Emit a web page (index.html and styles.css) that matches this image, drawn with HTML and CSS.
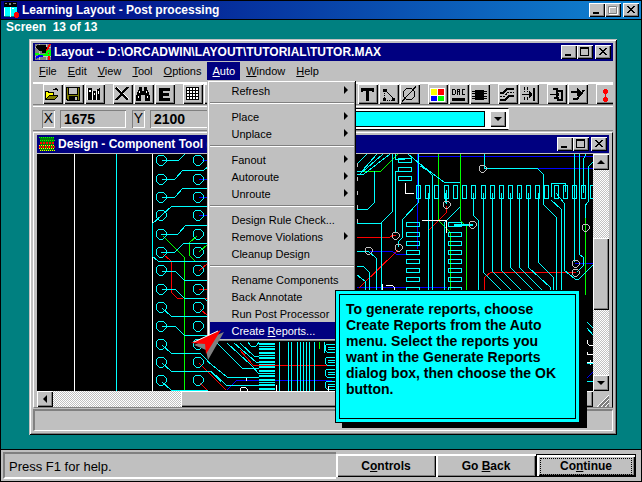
FILE: index.html
```html
<!DOCTYPE html>
<html lang="en">
<head>
<meta charset="utf-8">
<title>Learning Layout - Post processing</title>
<link rel="stylesheet" href="styles.css">
</head>
<body>
<div class="tutorial">
  <header class="titlebar titlebar-main">
    <svg class="app-icon" width="16" height="16" viewBox="0 0 16 16" shape-rendering="crispEdges"><path fill="#000" d="M1 0h13v5h-13z"/><path fill="#808080" d="M2 1h2v1h-2zM6 1h2v2h-2zM10 1h3v1h-3z"/><path fill="#0ff" d="M1 5h6v9h-6zM8 5h6v9h-6z"/><path fill="#fff" d="M1 6h1v8h-1zM7 5h1v10h-1zM9 6h2v1h-2z"/><path fill="#008080" d="M1 14h6v1h-6zM8 14h6v1h-6z"/><path fill="red" d="M12 10h3v1h1v4h-1v1h-3v-1h-1v-4h1z"/></svg>
    <h1>Learning Layout - Post processing</h1>
    <div class="winbtns">
      <button aria-label="Minimize"><svg width="12" height="10"><path d="M2 7h6v2h-6z"/></svg></button><button aria-label="Maximize" disabled><svg width="12" height="10"><path fill="none" stroke="#fff" d="M2.500 2.500h8v7h-8z"/><path fill="none" stroke="#808080" d="M1.500 1.500h8v7h-8z"/></svg></button><button class="apart" aria-label="Close"><svg width="12" height="10"><path d="M2 1h2v1h1v1h2v-1h1v-1h2v1h-1v1h-1v1h-1v1h1v1h1v1h1v1h-2v-1h-1v-1h-2v1h-1v1h-2v-1h1v-1h1v-1h1v-1h-1v-1h-1v-1h-1z"/></svg></button>
    </div>
  </header>

  <main class="lesson">
    <p class="progress">Screen&nbsp; 13 of 13</p>

    <section class="window">
      <header class="titlebar">
        <svg class="app-icon" width="16" height="16" viewBox="0 0 16 16" shape-rendering="crispEdges"><path fill="#808080" d="M0 0h16v16h-16z"/><path stroke="#c0c0c0" d="M0 3.500h16M0 12.500h16M4.500 0v16M11.500 0v16"/><path d="M2 1h9v2h1v4l-2 2h-3v-2h-3l-3-3z"/><path stroke="red" stroke-width="2" d="M15 0l-3 6v2l2 5v3" fill="none"/><path stroke="#0f0" stroke-width="2" fill="none" d="M0 10h3l2 1h5l3-4h3M12 8v3h3v-3"/><path stroke="#00f" stroke-width="2" d="M1 14l3-2h4"/></svg>
        <h2>Layout -- D:\ORCADWIN\LAYOUT\TUTORIAL\TUTOR.MAX</h2>
        <div class="winbtns">
          <button aria-label="Minimize"><svg width="12" height="10"><path d="M2 7h6v2h-6z"/></svg></button><button aria-label="Maximize"><svg width="12" height="10"><path d="M1 0h9v9h-9zM2 2v6h7v-6z" fill-rule="evenodd"/></svg></button><button class="apart" aria-label="Close"><svg width="12" height="10"><path d="M2 1h2v1h1v1h2v-1h1v-1h2v1h-1v1h-1v1h-1v1h1v1h1v1h1v1h-2v-1h-1v-1h-2v1h-1v1h-2v-1h1v-1h1v-1h1v-1h-1v-1h-1v-1h-1z"/></svg></button>
        </div>
      </header>

      <nav class="menubar">
        <button><u>F</u>ile</button><button><u>E</u>dit</button><button><u>V</u>iew</button><button><u>T</u>ool</button><button><u>O</u>ptions</button>
        <div class="menu-anchor">
          <button class="open"><u>A</u>uto</button>
          <div class="menu">
            <button class="sub">Refresh</button>
            <hr>
            <button class="sub">Place</button>
            <button class="sub">Unplace</button>
            <hr>
            <button class="sub">Fanout</button>
            <button class="sub">Autoroute</button>
            <button class="sub">Unroute</button>
            <hr>
            <button>Design Rule Check...</button>
            <button class="sub">Remove Violations</button>
            <button>Cleanup Design</button>
            <hr>
            <button>Rename Components</button>
            <button>Back Annotate</button>
            <button>Run Post Processor</button>
            <button class="selected">Create <u>R</u>eports...</button>
          </div>
        </div>
        <button><u>W</u>indow</button><button><u>H</u>elp</button>
      </nav>

      <div class="toolbar">
        <div class="group">
          <button aria-label="Open"><svg viewBox="0 0 16 16"><path d="M1 5h4v1h5v3h4v1l-3 4h-10zM9 3h2v-1h2v1h1v2h-1v-1h-4z"/><path fill="#ff0" d="M2 6h2v1h5v2h-4l-3 4z"/><path fill="#808000" d="M5 10h8l-3 3h-7z"/></svg></button>
          <button aria-label="Save"><svg viewBox="0 0 16 16"><path d="M1 1h14v14h-13l-1-1z"/><path fill="#808000" d="M2 2h1v7h10v-7h1v12h-11l-1-1z"/><path fill="#c0c0c0" d="M4 2h8v6h-8z"/><path d="M4 10h9v4h-9z"/><path fill="#c0c0c0" d="M10 11h2v3h-2z"/></svg></button>
          <button aria-label="Library"><svg viewBox="0 0 16 16"><path d="M2 2h4v12h-4zM7 5h3v9h-3zM11 3l3-1v12h-3z"/><path fill="#fff" d="M1 2h1v12h-1zM3 4h2v2h-2zM6 5h1v9h-1zM8 7h1v2h-1zM10 4h1v10h-1zM12 5h1v3h-1z"/></svg></button>
        </div>
        <div class="group">
          <button aria-label="Delete"><svg viewBox="0 0 16 16"><path stroke="#fff" d="M3 1l12 12"/><path fill="none" stroke="#000" stroke-width="2" d="M2 2l12 12M14 1l-12 13"/></svg></button>
          <button aria-label="Find"><svg viewBox="0 0 16 16"><path d="M4 1h3v4h2v-4h3v3h1l2 7v4h-5v-6h-4v6h-5v-4l2-7h1z"/><path fill="#fff" d="M4 5h1v2h-1zM3 10h1v2h-1zM11 5h1v2h-1zM12 10h1v2h-1z"/></svg></button>
          <button aria-label="Edit"><svg viewBox="0 0 16 16"><path d="M3 2h11v3h-7v2h6v3h-6v2h7v3h-11z"/></svg></button>
        </div>
        <div class="group">
          <button aria-label="Spreadsheet"><svg viewBox="0 0 16 16"><path d="M2 1h13v13h-13z"/><path fill="#fff" d="M3 2h2v2h-2zM6 2h2v2h-2zM9 2h2v2h-2zM12 2h2v2h-2zM3 5h2v2h-2zM6 5h2v2h-2zM9 5h2v2h-2zM12 5h2v2h-2zM3 8h2v2h-2zM6 8h2v2h-2zM9 8h2v2h-2zM12 8h2v2h-2zM3 11h2v2h-2zM6 11h2v2h-2zM9 11h2v2h-2zM12 11h2v2h-2z"/></svg></button>
          <button></button><button></button>
        </div>
        <div class="group"><button></button><button></button></div>
        <div class="group"><button></button></div>
        <div class="group"><button></button></div>
        <div class="group">
          <button aria-label="Text"><svg viewBox="0 0 16 16"><path d="M2 2h13v4h-2v-1h-3v10h-3v-10h-3v1h-2z"/></svg></button>
          <button aria-label="Connection"><svg viewBox="0 0 16 16"><path d="M3 3h4v3h-4zM3 12h3v3h-3zM12 12h3v3h-3z"/><path stroke="#000" fill="none" d="M5.500 4.500l9 9"/><path stroke="#000" fill="none" stroke-dasharray="1 1" d="M4.500 5v8M5 14.500h8"/></svg></button>
          <button aria-label="Error"><svg viewBox="0 0 16 16"><path stroke="#000" fill="none" d="M5.500 2.500h5l3 3v5l-3 3h-5l-3-3v-5zM1 15.500l14-15"/></svg></button>
        </div>
        <div class="group">
          <button aria-label="Color"><svg viewBox="0 0 16 16"><path fill="#fff" d="M1 2h15v14h-15z"/><path fill="#ff0" d="M2 3h6v6h-6z"/><path fill="red" d="M9 3h6v6h-6z"/><path fill="#00f" d="M2 10h6v5h-6z"/><path fill="#0f0" d="M9 10h6v5h-6z"/></svg></button>
          <button aria-label="Design rule check"><svg viewBox="0 0 16 16"><path d="M2 12h13v3h-13z"/><path fill="none" stroke="#000" d="M2.500 8.500v-5h2l1 1v3l-1 1zM7.500 9v-5.500h2v2h-2M9.500 6v3M15 3.500h-2l-1 1v3l1 1h2"/></svg></button>
          <button aria-label="Footprint"><svg viewBox="0 0 16 16"><path d="M4 4h9v10h-9zM1 5h15v1h-15zM1 7h15v1h-15zM1 10h15v1h-15zM1 12h15v1h-15z"/></svg></button>
        </div>
        <div class="group">
          <button aria-label="Auto path route"><svg viewBox="0 0 16 16"><path fill="none" stroke="#000" stroke-width="2" d="M1 7h3l4-4h7M1 14h5l4-4h5"/><path fill="none" stroke="#000" stroke-dasharray="2 1" d="M1 10.500h4l4-4h6"/></svg></button>
          <button aria-label="Shove track"><svg viewBox="0 0 16 16"><path stroke="#000" stroke-dasharray="3 1" d="M4.500 1v5M4.500 11v4M7.500 1v5M7.500 11v4" fill="none"/><path d="M13 2h2v13h-2zM2 8h7v-3l3 3v1l-3 3v-3h-7z"/></svg></button>
        </div>
        <div class="group">
          <button aria-label="Edit segment"><svg viewBox="0 0 16 16"><path fill="none" stroke="#000" stroke-width="2" d="M5 3h4v2h5v9h-4v-2h-4"/><path d="M2 8h6v-3l3 3v1l-3 3v-3h-6z"/></svg></button>
          <button aria-label="Add route"><svg viewBox="0 0 16 16"><path fill="none" stroke="#000" stroke-width="2" d="M2 6h8M4 13h4l7-9"/><path d="M8 2l4 4-4 4z"/></svg></button>
        </div>
        <div class="group last">
          <button aria-label="Refresh all"><svg viewBox="0 0 16 16"><path fill="red" d="M7 3h3v1h1v3h-1v1h-1v3h1v1h1v3h-1v1h-3v-1h-1v-3h1v-1h1v-3h-1v-1h-1v-3h1z"/></svg></button>
        </div>
      </div>

      <div class="coords">
        <label for="x">X</label><input id="x" value="1675" readonly>
        <label for="y">Y</label><input id="y" value="2100" readonly>
        <div class="combo"><select aria-label="Layer"><option></option></select><span class="scrollbtn"><i class="down"></i></span></div>
      </div>

      <section class="design">
        <header class="titlebar">
          <svg class="app-icon" width="16" height="16" viewBox="0 0 16 16" shape-rendering="crispEdges"><path fill="#008000" d="M1 1h14v14h-14z"/><g fill="none" stroke-dasharray="1 1"><path stroke="#0f0" d="M0 1.500h16M1 4.500h15"/><path stroke="red" stroke-width="2" stroke-dasharray="2 1" d="M1 7h15M0 11h16"/><path stroke="#ff0" d="M0 9.500h16M1 14.500h15M0 12.500h15"/></g></svg>
          <h2>Design - Component Tool (</h2>
          <div class="winbtns">
            <button aria-label="Minimize"><svg width="12" height="10"><path d="M2 7h6v2h-6z"/></svg></button><button aria-label="Maximize"><svg width="12" height="10"><path d="M1 0h9v9h-9zM2 2v6h7v-6z" fill-rule="evenodd"/></svg></button><button class="apart" aria-label="Close"><svg width="12" height="10"><path d="M2 1h2v1h1v1h2v-1h1v-1h2v1h-1v1h-1v1h-1v1h1v1h1v1h1v1h-2v-1h-1v-1h-2v1h-1v1h-2v-1h1v-1h1v-1h1v-1h-1v-1h-1v-1h-1z"/></svg></button>
          </div>
        </header>
        <div class="viewport">
          <svg class="board" shape-rendering="crispEdges">
            <defs>
              <path id="via" d="M-2 -5h4l3 3v4l-3 3h-4l-3-3v-4z"/>
              <path id="ring" d="M-1 -3h3l2 2v3l-2 2h-3l-2-2v-3z"/>
              <path id="pin" d="M0 0h4v13h-4z"/>
              <path id="pad" d="M0 0h13v4h-13z"/>
            </defs>
            <g transform="translate(-37 -154)" fill="none" stroke-width="1">
              <path stroke="#00f" d="M202 160h6M199 179h9M199 197h9M199 215h9M417 154v95M417 156h176M537 168h56M370 251h22l4 3h15M357 287h90M575 263h18M227 390l10-10h95M587 378l6-6"/>
              <path stroke="red" d="M163 254l8 7v31l6 6h6M199 271l9-8M199 289h9M204 298h4M200 309l8 7M199 363l16 16M200 383l8 8M357 237h33l3-2h3M398 250l-39 38M446 206v7l-17 17M576 272h-85l-7 6v14M240 350l13 15h75M205 369l21 21"/>
              <path stroke="#0f0" d="M163 236l21 21v134M197 236l-8 7v12l6 6M199 252l9-8M361 171h20l17-17M438 154v66l12 12v60M460 154v66l6 6v66M585 210v86M319 341v8"/>
              <path stroke="#fff" d="M74 154v237M152 154v71M152 256v135"/>
              <path stroke="#0ff" d="M116 154v237M152 224v32M162 160h17l6-6M162 179h13l8-9h21l4-3M162 197h13l8-9h25M152 224l20-18h36M161 234h17l8-9h22M161 252h14l9-9h24M152 256l6 5h50M162 271h13l9 9h24M162 289h13l9 9h20l4 4M162 308l9 8h37M162 326h13l9 9h24M162 345l9 8h29l14 14M162 363l9 8h39l11 11M162 382l9 8h37"/>
              <path stroke="#0ff" d="M217 343l25 25h17M227 343l24 22 8 9M234 343l22 19h3M240 343l14 13h5M207 361l20 16h32M205 371h6l15 14h33M279 341v50M288 341v50M291 341v50M297 341v50M300 341v50M303 341v50M306 341v50M309 341v50M314 341v50M324 341v12M247 341l4 5h5l4-5"/>
              <path stroke="#0ff" d="M357 164l10-10M357 171h5l15-17M360 174l23-20M357 174h7l26-20M374 171v32l-6 6h-11M392 154v58l-11 11h-24M381 223v68M395 154v5h10M395 233v-62h10M418 154v49l-16 17v18l-4 4v5M357 251h11l8 7v33M357 266h6l6 6v19M357 275l8 6v10M408 154l12 10 24 18h16M420 166l7 4 5 5v117M428 193v98M446 190v14M460 207l-16 16v69M473 193v22l5 5v72M483 193v79l20 20M492 193v78l21 21M501 193v77l22 22M510 193v74l25 25M519 193v74l24 24M528 193v74l22 20v5M538 193v69l15 15v15M484 154v14h53l6 6v30l13 13v75M551 197v-14h14v9M551 200l10 9v83M556 193l8 10v67l11 9h4l14-14M574 154v108M579 154v100l4 3v9l-6 6M583 193v-33l3-6M593 162l-5 5v35l-3 4v12"/>
              <path stroke="#0ff" stroke-width="2" d="M454 225h19M446 193v10"/>
              <g stroke="#0ff">
                <use href="#via" x="161" y="160"/><use href="#via" x="161" y="179"/><use href="#via" x="161" y="197"/><use href="#via" x="161" y="215"/><use href="#via" x="161" y="234"/><use href="#via" x="161" y="252"/><use href="#via" x="161" y="270"/><use href="#via" x="161" y="289"/><use href="#via" x="161" y="307"/><use href="#via" x="161" y="326"/><use href="#via" x="161" y="344"/><use href="#via" x="161" y="362"/><use href="#via" x="161" y="380"/>
                <use href="#via" x="198" y="160"/><use href="#via" x="198" y="179"/><use href="#via" x="198" y="197"/><use href="#via" x="198" y="215"/><use href="#via" x="198" y="234"/><use href="#via" x="198" y="252"/><use href="#via" x="198" y="270"/><use href="#via" x="198" y="289"/><use href="#via" x="198" y="307"/><use href="#via" x="198" y="326"/><use href="#via" x="198" y="344"/><use href="#via" x="198" y="362"/><use href="#via" x="198" y="380"/>
                <use href="#pin" x="416" y="185"/><use href="#pin" x="425" y="185"/><use href="#pin" x="434" y="185"/><use href="#pin" x="444" y="185"/><use href="#pin" x="453" y="185"/><use href="#pin" x="462" y="185"/><use href="#pin" x="471" y="185"/><use href="#pin" x="481" y="185"/><use href="#pin" x="490" y="185"/><use href="#pin" x="499" y="185"/><use href="#pin" x="508" y="185"/><use href="#pin" x="517" y="185"/><use href="#pin" x="526" y="185"/><use href="#pin" x="535" y="185"/><use href="#pin" x="544" y="185"/><use href="#pin" x="554" y="185"/><use href="#pin" x="563" y="185"/><use href="#pin" x="572" y="185"/><use href="#pin" x="581" y="185"/><use href="#pin" x="590" y="185"/>
                <use href="#pad" x="398" y="158"/><use href="#pad" x="398" y="167"/><use href="#pad" x="398" y="176"/>
                <use href="#pad" x="406" y="222"/><use href="#pad" x="406" y="232"/><use href="#pad" x="406" y="241"/><use href="#pad" x="406" y="250"/><use href="#pad" x="406" y="259"/><use href="#pad" x="406" y="268"/><use href="#pad" x="406" y="277"/><use href="#pad" x="406" y="287"/>
                <use href="#pad" x="448" y="222"/><use href="#pad" x="448" y="232"/><use href="#pad" x="448" y="241"/><use href="#pad" x="448" y="250"/><use href="#pad" x="448" y="259"/><use href="#pad" x="448" y="268"/><use href="#pad" x="448" y="277"/><use href="#pad" x="448" y="287"/>
              </g>
              <path stroke="#0ff" stroke-width="16" stroke-dasharray="2 1 1 1 2 2" d="M267 343v48"/>
              <path stroke="#0ff" d="M335 344h-8l-2 2v4l2 2h8M335 357h-8l-2 2v4l2 2h8M335 369h-8l-2 2v4l2 2h8M335 381h-8l-2 2v4l2 2h8M328 347h7M328 349h7M328 360h7M328 362h7M328 372h7M328 374h7M328 384h7M328 386h7"/>
              <g stroke="#c0c0c0"><use href="#ring" x="395" y="235"/><use href="#ring" x="398" y="247"/><use href="#ring" x="368" y="250"/><use href="#ring" x="482" y="168"/><use href="#ring" x="446" y="204"/><use href="#ring" x="472" y="224"/><use href="#ring" x="585" y="227"/><use href="#ring" x="575" y="263"/><use href="#ring" x="575" y="272"/></g>
              <path stroke="#c0c0c0" stroke-dasharray="4 10" d="M357 163v70"/>
              <path stroke="#fff" d="M405 183v10h9M422 220h24v13M382 284v6M386 285h6l2 2v4M240 391v-2l2-2h3l2 2v2M246 378v3M276 385v6M328 386v5M587 340v3l2 2h4M587 352v2h6M587 362h6M590 360v5"/>
              <path stroke="#0ff" d="M587 322l6 6M587 328l6 7M587 363h6M587 381h6"/>
            </g>
          </svg>
          <div class="vscroll">
            <button class="scrollbtn" aria-label="Scroll up"><i class="up"></i></button>
            <span class="vthumb"></span>
            <button class="scrollbtn" aria-label="Scroll down"><i class="down"></i></button>
          </div>
          <div class="hscroll">
            <button class="scrollbtn" aria-label="Scroll left"><i class="left"></i></button>
            <span class="hthumb"></span>
          </div>
          <svg class="grip" width="16" height="16" shape-rendering="crispEdges"><path stroke="#fff" d="M4 16l12-12M8 16l8-8M12 16l4-4"/><path stroke="#808080" stroke-width="2" d="M6 16l10-10M10 16l6-6M14 16l2-2"/></svg>
        </div>
      </section>
      <div class="window-status"></div>
    </section>

    <svg class="pointer" width="36" height="32" viewBox="0 0 36 32"><path fill="#808080" d="M4 15l30-13-16 28-2-10z"/><path fill="red" d="M1 13l30-13-15 24-1-10z"/><path fill="none" stroke="#fff" d="M4 12l24-11"/></svg>
    <aside class="callout"><p>To generate reports, choose<br>Create Reports from the Auto<br>menu. Select the reports you<br>want in the Generate Reports<br>dialog box, then choose the OK<br>button.</p></aside>
  </main>

  <footer class="statusbar">
    <p>Press F1 for help.</p>
    <button>C<u>o</u>ntrols</button>
    <button>Go <u>B</u>ack</button>
    <button class="default"><span>Co<u>n</u>tinue</span></button>
  </footer>
</div>
</body>
</html>
```
FILE: styles.css
```css
:root {
  --face: #c0c0c0;
  --shade: #808080;
  --navy: #000080;
  --raised: inset 1px 1px #fff, inset -1px -1px #000, inset -2px -2px var(--shade);
}
* { box-sizing: border-box; }
body { margin: 0; font: 11px "Liberation Sans", sans-serif; color: #000; }
h1, h2, p { margin: 0; }
button { font: inherit; color: inherit; margin: 0; padding: 0; border: 0; border-radius: 0; background: var(--face); }
svg { display: block; flex: none; }

.tutorial { display: flex; flex-direction: column; height: 100vh; border: 1px solid #000; background: #008080; }

/* Title bars */
.titlebar { display: flex; align-items: center; gap: 3px; height: 18px; flex: none; padding: 0 2px; background: var(--navy); color: #fff; }
.titlebar-main { background: linear-gradient(90deg, #000080, #1084d0); border-bottom: 1px solid #000; height: 19px; }
.titlebar h1, .titlebar h2 { flex: 1; min-width: 0; overflow: hidden; white-space: nowrap; font-size: 12px; line-height: 16px; font-weight: bold; }
.winbtns { display: flex; }
.winbtns button { width: 16px; height: 14px; padding: 2px; box-shadow: var(--raised); }
.winbtns .apart { margin-left: 2px; }

/* Lesson area */
.lesson { position: relative; flex: 1; min-height: 0; display: flex; flex-direction: column; padding: 0 24px 14px 28px; }
.progress { margin-left: -23px; height: 19px; flex: none; color: #fff; font: bold 12px/14px "Liberation Sans", sans-serif; }

.window { flex: 1; min-height: 0; display: flex; flex-direction: column; padding: 4px; background: var(--face); box-shadow: inset 1px 1px var(--face), inset -1px -1px #000, inset 2px 2px #fff, inset -2px -2px var(--shade); }

/* Menus */
.menubar { display: flex; flex: none; gap: 1px; height: 21px; padding: 1px 0 0 1px; }
.menubar button { height: 18px; padding: 0 5px; font-size: 11px; }
.menubar .open { background: var(--navy); color: #fff; }
.menu-anchor { position: relative; }
.menu { position: absolute; z-index: 2; left: 0; top: 18px; width: 149px; padding: 2px 2px 3px 3px; background: var(--face); box-shadow: inset 1px 1px var(--face), inset -1px -1px #000, inset 2px 2px #fff, inset -2px -2px var(--shade); }
.menu button { position: relative; display: block; width: 100%; height: 17px; padding: 0 0 0 21px; text-align: left; white-space: nowrap; font-size: 11px; }
.menu .selected { background: var(--navy); color: #fff; }
.menu .sub::after { content: ""; position: absolute; right: 6px; top: 4px; border: 4px solid transparent; border-left-color: #000; border-right-width: 0; }
.menu hr { height: 2px; margin: 3px 0 4px; border: 0; border-top: 1px solid var(--shade); background: #fff; }

/* Toolbar */
.toolbar { display: flex; flex: none; gap: 7px; height: 25px; padding-left: 10px; border-top: 2px solid #fff; border-bottom: 1px solid #fff; box-shadow: inset 0 -1px var(--face), inset 0 -2px var(--shade); overflow: hidden; }
.group { display: flex; flex: none; gap: 1px; padding-right: 1px; }
.toolbar button { width: 20px; height: 20px; padding: 1px 2px 2px 1px; box-shadow: var(--raised); }
.toolbar button svg { width: 16px; height: 16px; shape-rendering: crispEdges; }

/* Coordinates row */
.coords { display: flex; flex: none; align-items: center; height: 24px; padding-left: 9px; border-bottom: 1px solid var(--shade); font: bold 12px "Liberation Sans", sans-serif; }
.coords label { width: 13px; height: 18px; line-height: 17px; text-align: center; font-size: 14px; font-weight: normal; box-shadow: inset 1px 1px var(--shade), inset -1px -1px #fff; }
.coords input { width: 66px; height: 18px; margin: 0 6px 0 5px; padding: 0 4px; border: 0; border-radius: 0; outline: 0; background: var(--face); box-shadow: inset 1px 1px var(--shade), inset -1px -1px #fff; font: inherit; font-size: 14px; }
.combo { display: flex; align-items: center; width: 287px; height: 22px; padding: 2px; background: #fff; border: 1px solid #000; border-right-color: #fff; }
.combo select { appearance: none; flex: 1; height: 16px; margin-right: 5px; border: 1px solid #000; border-radius: 0; background: #0ff; }

/* Design window */
.design { flex: 1; min-height: 0; display: flex; flex-direction: column; margin-top: 1px; padding: 2px 3px 0 3px; border: 1px solid #fff; border-right-color: #000; border-bottom-color: var(--shade); }
.viewport { flex: 1; min-height: 0; display: grid; grid-template: minmax(0, 1fr) 16px / minmax(0, 1fr) 16px; padding-top: 1px; }
.board { width: 100%; height: 100%; background: #000; }
.vscroll, .hscroll { display: flex; background: repeating-conic-gradient(#fff 0 25%, #c0c0c0 0 50%) 0 0 / 2px 2px; }
.vscroll { flex-direction: column; justify-content: space-between; }
.scrollbtn { display: flex; align-items: center; justify-content: center; flex: none; width: 16px; height: 16px; background: var(--face); box-shadow: var(--raised); }
.vthumb, .hthumb { background: var(--face); box-shadow: var(--raised); }
.vthumb { height: 72px; margin-top: 2px; }
.hthumb { flex: 1; margin-left: 128px; }
.up, .down { border: 4px solid transparent; border-top: 0; border-bottom-color: #000; }
.down { border-top: 4px solid #000; border-bottom: 0; }
.left { border: 4px solid transparent; border-left: 0; border-right-color: #000; }
.window-status { flex: none; height: 22px; margin-top: 1px; border: 2px solid var(--shade); border-right: 1px solid #fff; border-bottom: 1px solid #fff; }

/* Overlays */
.pointer { position: absolute; left: 189px; top: 310px; z-index: 3; }
.callout { position: absolute; z-index: 3; left: 334px; top: 270px; width: 245px; height: 133px; padding: 3px; border: 1px solid #000; background: #0ff; box-shadow: 7px 5px #000; }
.callout p { height: 100%; padding: 6px; border: 1px solid #000; white-space: nowrap; font-size: 14px; font-weight: bold; line-height: 16px; }

/* Bottom bar */
.statusbar { display: flex; flex: none; height: 32px; padding: 2px; border-top: 1px solid #000; background: var(--face); }
.statusbar p { flex: 1; padding: 4px; line-height: 18px; font-size: 13px; border-top: 2px solid var(--shade); border-left: 2px solid var(--shade); border-bottom: 2px solid #fff; }
.statusbar button { width: 100px; margin: 2px 0; font-size: 12px; font-weight: bold; box-shadow: inset 1px 1px #fff, inset 2px 2px #fff, inset -1px -1px #000, inset -2px -2px var(--shade); }
.statusbar .default { border: 1px solid #000; padding: 3px; margin-right: 3px; }
.default span { display: block; border: 1px dotted #000; line-height: 15px; }
```
